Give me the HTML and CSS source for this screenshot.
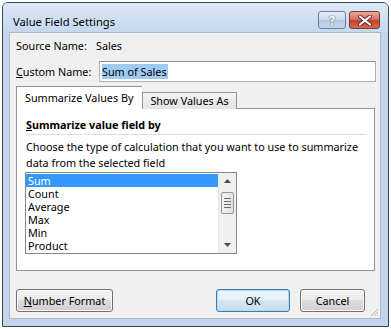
FILE: index.html
```html
<!DOCTYPE html>
<html lang="en">
<head>
    <meta charset="UTF-8">
    <title>Value Field Settings</title>
    <link rel="stylesheet" href="styles.css">
</head>
<body>
    <div class="window">
        <div class="titlebar">
            <span class="title">Value Field Settings</span>
            <div class="caption-buttons">
                <span class="cap-btn help">?</span>
                <span class="cap-btn close">
                    <svg width="14" height="11" viewBox="0 0 14 11">
                        <path d="M2 1.5 L12 9.5 M12 1.5 L2 9.5" stroke="#5a2a2a" stroke-width="4" stroke-linecap="round"/>
                        <path d="M2 1.5 L12 9.5 M12 1.5 L2 9.5" stroke="#ffffff" stroke-width="2.2" stroke-linecap="round"/>
                    </svg>
                </span>
            </div>
        </div>

        <div class="client">
            <div class="source-row">
                <span class="field-label">Source Name:</span>
                <span>Sales</span>
            </div>

            <div class="custom-row">
                <label class="field-label" for="customName"><u>C</u>ustom Name:</label>
                <div class="textbox" id="customName"><span class="selected-text">Sum of Sales</span></div>
            </div>

            <div class="tabs">
                <div class="tab active">Summarize Values By</div>
                <div class="tab">Show Values As</div>
            </div>
            <div class="panel">
                <div class="group-title"><u>S</u>ummarize value field by</div>
                <p class="desc">Choose the type of calculation that you want to use to summarize<br>data from the selected field</p>
                <div class="listbox">
                    <ul class="items">
                        <li class="selected">Sum</li>
                        <li>Count</li>
                        <li>Average</li>
                        <li>Max</li>
                        <li>Min</li>
                        <li>Product</li>
                    </ul>
                    <div class="scrollbar">
                        <svg class="arrow" width="7" height="4" viewBox="0 0 7 4"><path d="M0 4 L3.5 0 L7 4 Z" fill="#4d4d4d"/></svg>
                        <div class="track">
                            <div class="thumb">
                                <span></span><span></span><span></span><span></span>
                            </div>
                        </div>
                        <svg class="arrow" width="7" height="4" viewBox="0 0 7 4"><path d="M0 0 L7 0 L3.5 4 Z" fill="#4d4d4d"/></svg>
                    </div>
                </div>
            </div>

            <div class="buttons">
                <button class="btn number-format"><u>N</u>umber Format</button>
                <button class="btn ok">OK</button>
                <button class="btn cancel">Cancel</button>
            </div>

            <svg class="grip" width="10" height="10" viewBox="0 0 10 10">
                <path d="M9 2 L2 9 M9 5 L5 9 M9 8 L8 9" stroke="#b5b5b5" stroke-width="1"/>
            </svg>
        </div>
    </div>
</body>
</html>
```

FILE: styles.css
```css
body {
    margin: 0;
    background: #ffffff;
    font-family: "Noto Sans", "Open Sans", sans-serif;
    font-size: 10.8px;
    color: #000000;
}
.window {
    margin: 2px 0 0 2px;
    width: 385px;
    height: 323px;
    border: 1px solid #3c4650;
    border-radius: 6px 6px 0 0;
    background: #c3d5ea;
    display: flex;
    flex-direction: column;
}
.titlebar {
    flex-shrink: 0;
    height: 29px;
    display: flex;
    justify-content: space-between;
    align-items: flex-start;
    padding: 0 8px 0 10px;
    border-radius: 5px 5px 0 0;
    background: linear-gradient(#dbe7f5, #c5d8ee);
}
.title {
    margin-top: 11px;
    font-size: 11.2px;
    line-height: 15px;
}
.caption-buttons {
    display: flex;
    gap: 3px;
    margin-top: 8px;
}
.cap-btn {
    height: 16px;
    border: 1px solid #6d7f95;
    border-radius: 3px;
    display: flex;
    align-items: center;
    justify-content: center;
}
.help {
    width: 26px;
    background: linear-gradient(#e4edf7 0%, #c9d8ea 50%, #b4c8e0 51%, #c5d6ea 100%);
    color: #ffffff;
    font-weight: bold;
    font-size: 13px;
    text-shadow: 0 0 1px #5b6b7e, 0 0 1px #5b6b7e, 0 0 1px #5b6b7e;
}
.close {
    width: 29px;
    border-color: #7a3a30;
    background: linear-gradient(#e9a99a 0%, #d8735f 45%, #c7412b 55%, #d66a50 100%);
}
.client {
    position: relative;
    margin: 0 7px 7px 6px;
    flex: 1;
    background: #f0f0f0;
    border: 1px solid #aab9cc;
    padding: 0 4px 0 6px;
    display: flex;
    flex-direction: column;
}
.client > * {
    flex-shrink: 0;
}
.source-row {
    display: flex;
    height: 15px;
    line-height: 15px;
    margin-top: 5px;
}
.field-label {
    width: 80px;
}
.custom-row {
    display: flex;
    align-items: center;
    height: 21px;
    margin-top: 8px;
}
.custom-row .field-label {
    width: 83px;
}
.textbox {
    flex: 1;
    height: 19px;
    border: 1px solid #abadb3;
    border-top-color: #8c919a;
    background: #ffffff;
    display: flex;
    align-items: center;
    padding-left: 2px;
}
.selected-text {
    background: #9fcbf3;
    line-height: 15px;
    padding-right: 1px;
}
.tabs {
    display: flex;
    align-items: flex-end;
    margin-top: 5px;
    position: relative;
    z-index: 1;
    height: 22px;
}
.tab {
    border: 1px solid #8e939a;
    border-bottom: none;
    padding: 0 7px;
    height: 16px;
    line-height: 16px;
    background: linear-gradient(#f3f3f3, #e3e3e3);
    white-space: nowrap;
}
.tab.active {
    height: 23px;
    line-height: 22px;
    margin-bottom: -1px;
    background: #ffffff;
    padding: 0 9px 0 8px;
    border-right: none;
}
.panel {
    height: 161px;
    margin-top: -1px;
    margin-right: 1px;
    border: 1px solid #8e939a;
    background: #ffffff;
    padding: 0 8px 0 9px;
}
.group-title {
    font-weight: bold;
    line-height: 15px;
    margin-top: 8px;
    padding-bottom: 2px;
    border-bottom: 1px solid #dadfe4;
}
.desc {
    margin: 4px 0 0 0;
    line-height: 16px;
    white-space: nowrap;
}
.listbox {
    margin: 1px 0 0 -1px;
    width: 210px;
    height: 80px;
    border: 1px solid #828790;
    display: flex;
    background: #ffffff;
}
.items {
    list-style: none;
    margin: 1px 0 0 0;
    padding: 0;
    flex: 1;
}
.items li {
    height: 13px;
    line-height: 13px;
    padding-left: 2px;
}
.items li.selected {
    background: #3399ff;
    color: #ffffff;
}
.scrollbar {
    width: 17px;
    background: #f0f0f0;
    border-left: 1px solid #e6e6e6;
    display: flex;
    flex-direction: column;
    align-items: center;
}
.scrollbar .arrow {
    margin: 6px 0;
}
.track {
    flex: 1;
    width: 100%;
    display: flex;
    justify-content: center;
}
.thumb {
    margin-top: 3px;
    width: 11px;
    height: 20px;
    border: 1px solid #979797;
    border-radius: 2px;
    background: linear-gradient(90deg, #f3f3f3, #e2e2e2);
    display: flex;
    flex-direction: column;
    align-items: center;
    justify-content: center;
    gap: 2px;
}
.thumb span {
    width: 7px;
    height: 1px;
    background: #6f6f6f;
}
.buttons {
    display: flex;
    margin-top: 18px;
    padding-right: 11px;
}
.btn {
    font-family: inherit;
    font-size: 10.8px;
    height: 23px;
    border: 1px solid #707070;
    border-radius: 3px;
    background: linear-gradient(#f2f2f2 0%, #ebebeb 49%, #dddddd 50%, #cfcfcf 100%);
    box-shadow: inset 0 0 0 1px #fcfcfc;
    padding: 0;
    color: #000000;
}
.number-format {
    width: 97px;
}
.ok {
    width: 74px;
    margin-left: auto;
    border-color: #3c7fb1;
    box-shadow: inset 0 0 0 1px #a9dcf6;
    background: linear-gradient(#f0f6fa 0%, #e6f0f7 49%, #d4e6f3 50%, #c7dfee 100%);
}
.cancel {
    width: 65px;
    margin-left: 10px;
}
.grip {
    position: absolute;
    right: 1px;
    bottom: 1px;
}
```
